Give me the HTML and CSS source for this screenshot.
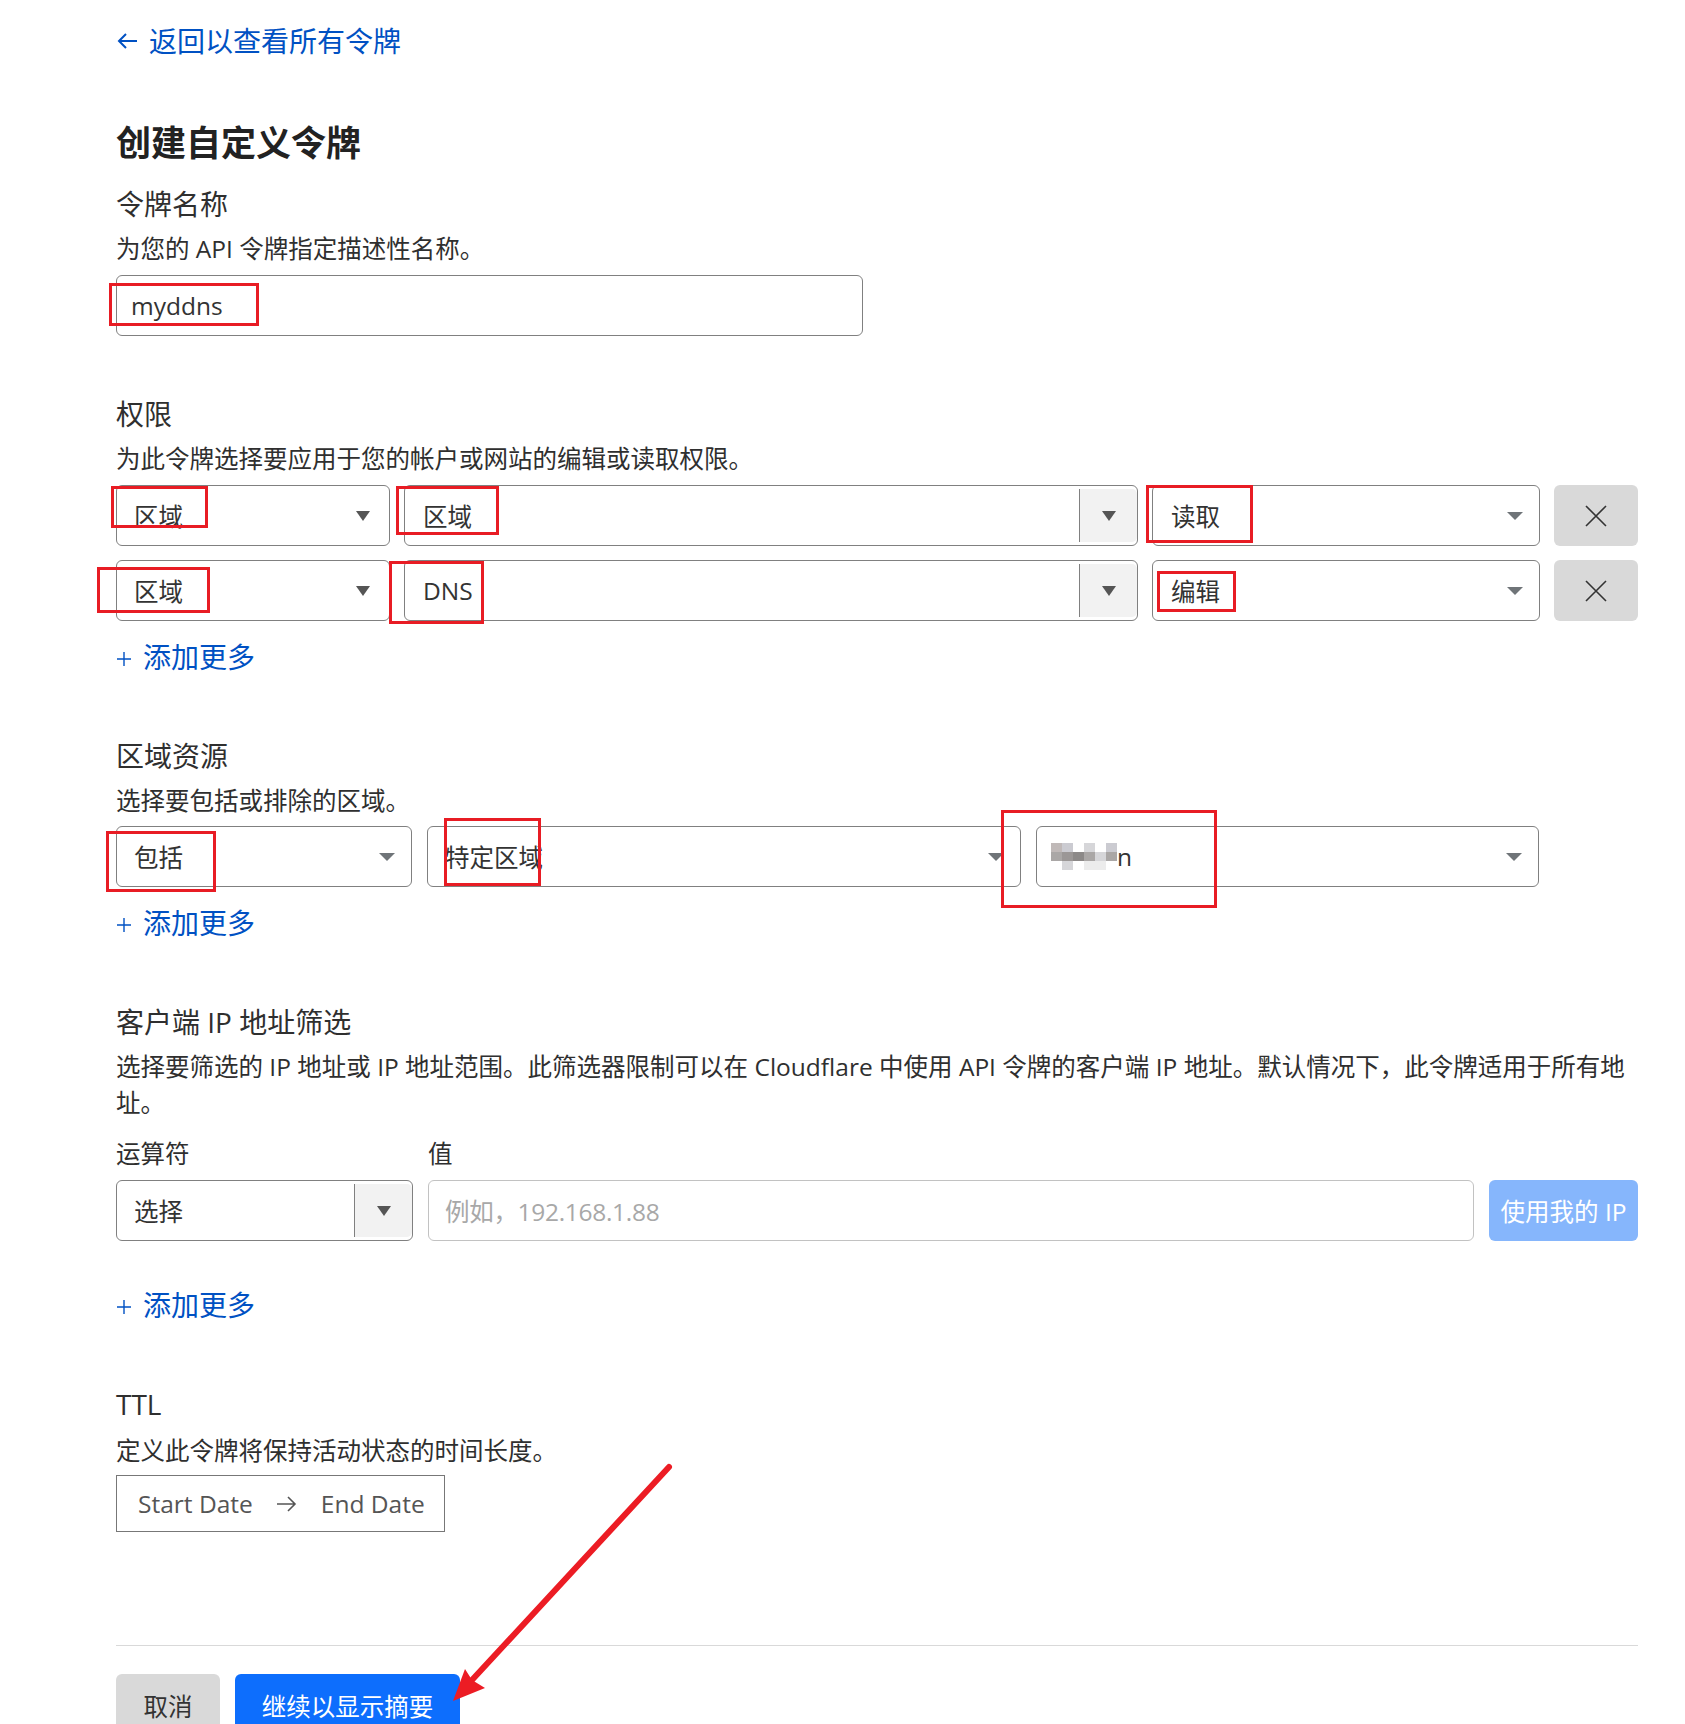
FILE: index.html
```html
<!DOCTYPE html>
<html lang="zh-CN">
<head>
<meta charset="utf-8">
<title>创建自定义令牌</title>
<link rel="stylesheet" href="styles.css">
</head>
<body>
<div class="page">
  <a class="back-link" href="#">
    <svg width="22" height="20" viewBox="0 0 22 20"><path d="M10 3 L3 10 L10 17 M3 10 H21" fill="none" stroke="currentColor" stroke-width="2"/></svg>
    返回以查看所有令牌
  </a>

  <h1 class="page-title">创建自定义令牌</h1>

  <section class="section">
    <h2 class="section-title">令牌名称</h2>
    <p class="section-desc">为您的 API 令牌指定描述性名称。</p>
    <div class="field field-name">myddns<span class="mark mark-name"></span></div>
  </section>

  <section class="section">
    <h2 class="section-title">权限</h2>
    <p class="section-desc">为此令牌选择要应用于您的帐户或网站的编辑或读取权限。</p>
    <div class="perm-rows">
      <div class="perm-row">
        <div class="field select">区域<span class="caret caret-dark"></span><span class="mark mark-p1"></span></div>
        <div class="field select combo wide-pad">区域<span class="combo-arrow"><span class="caret caret-dark"></span></span><span class="mark mark-p2"></span></div>
        <div class="field select wide-pad">读取<span class="caret"></span><span class="mark mark-p3"></span></div>
        <button class="remove-btn"><svg width="24" height="24" viewBox="0 0 24 24"><path d="M2 2 L22 22 M22 2 L2 22" stroke="#333" stroke-width="1.6"/></svg></button>
      </div>
      <div class="perm-row">
        <div class="field select">区域<span class="caret caret-dark"></span><span class="mark mark-p4"></span></div>
        <div class="field select combo wide-pad">DNS<span class="combo-arrow"><span class="caret caret-dark"></span></span><span class="mark mark-p5"></span></div>
        <div class="field select wide-pad">编辑<span class="caret"></span><span class="mark mark-p6"></span></div>
        <button class="remove-btn"><svg width="24" height="24" viewBox="0 0 24 24"><path d="M2 2 L22 22 M22 2 L2 22" stroke="#333" stroke-width="1.6"/></svg></button>
      </div>
    </div>
    <a class="add-more" href="#"><svg width="16" height="16" viewBox="0 0 16 16"><path d="M8 1 V15 M1 8 H15" stroke="currentColor" stroke-width="1.4"/></svg>添加更多</a>
  </section>

  <section class="section">
    <h2 class="section-title">区域资源</h2>
    <p class="section-desc">选择要包括或排除的区域。</p>
    <div class="zone-row">
      <div class="field select">包括<span class="caret"></span><span class="mark mark-z1"></span></div>
      <div class="field select">特定区域<span class="caret"></span><span class="mark mark-z2"></span></div>
      <div class="field select tight-pad">
        <span class="blurred">
          <i class="b1"></i><i class="b2"></i><i class="b0"></i><i class="b3"></i><i class="b0"></i><i class="b2"></i>
          <i class="b4"></i><i class="b5"></i><i class="b6"></i><i class="b4"></i><i class="b3"></i><i class="b4"></i>
          <i class="b0"></i><i class="b3"></i><i class="b0"></i><i class="b7"></i><i class="b7"></i><i class="b0"></i>
        </span>n<span class="caret"></span><span class="mark mark-z3"></span>
      </div>
    </div>
    <a class="add-more" href="#"><svg width="16" height="16" viewBox="0 0 16 16"><path d="M8 1 V15 M1 8 H15" stroke="currentColor" stroke-width="1.4"/></svg>添加更多</a>
  </section>

  <section class="section">
    <h2 class="section-title">客户端 IP 地址筛选</h2>
    <p class="section-desc">选择要筛选的 IP 地址或 IP 地址范围。此筛选器限制可以在 Cloudflare 中使用 API 令牌的客户端 IP 地址。默认情况下，此令牌适用于所有地址。</p>
    <div class="ip-grid">
      <label class="ip-label">运算符</label>
      <label class="ip-label">值</label>
      <span></span>
      <div class="field select combo">选择<span class="combo-arrow"><span class="caret caret-dark"></span></span></div>
      <div class="field field-value">例如，192.168.1.88</div>
      <button class="my-ip-btn">使用我的 IP</button>
    </div>
    <a class="add-more add-more-far" href="#"><svg width="16" height="16" viewBox="0 0 16 16"><path d="M8 1 V15 M1 8 H15" stroke="currentColor" stroke-width="1.4"/></svg>添加更多</a>
  </section>

  <section class="section section-ttl">
    <h2 class="section-title">TTL</h2>
    <p class="section-desc">定义此令牌将保持活动状态的时间长度。</p>
    <div class="date-range">
      <span>Start Date</span>
      <svg width="22" height="20" viewBox="0 0 22 20"><path d="M12 3 L19 10 L12 17 M19 10 H1" fill="none" stroke="#555" stroke-width="1.6"/></svg>
      <span>End Date</span>
    </div>
  </section>

  <div class="footer">
    <button class="btn btn-cancel">取消</button>
    <button class="btn btn-primary">继续以显示摘要</button>
  </div>

  <svg class="pointer" width="1685" height="1724" viewBox="0 0 1685 1724">
    <line x1="669" y1="1447" x2="472" y2="1660" stroke="#ec1c24" stroke-width="6" stroke-linecap="round"/>
    <polygon points="453,1681 465,1649 472,1660 485,1668" fill="#ec1c24"/>
  </svg>
</div>
</body>
</html>
```

FILE: styles.css
```css
html, body {
  margin: 0;
  background: #fff;
}

body {
  font-family: "Open Sans", "Noto Sans CJK SC", sans-serif;
  color: #2f2f2f;
  font-size: 24.5px;
}

.page {
  position: relative;
  width: 1522px;
  padding-left: 116px;
  padding-bottom: 40px;
}

.back-link {
  display: flex;
  align-items: center;
  gap: 11px;
  width: fit-content;
  margin-top: 20px;
  font-size: 28px;
  line-height: 42px;
  color: #0051c3;
  text-decoration: none;
}

.page-title {
  margin: 56px 0 0;
  font-size: 35px;
  line-height: 50px;
  font-weight: 700;
  color: #222;
}

.section {
  margin-top: 15px;
}

.section + .section {
  margin-top: 57px;
}

.section-title {
  margin: 0;
  font-size: 28px;
  line-height: 42px;
  font-weight: 400;
}

.section-desc {
  margin: 6px 0 0;
  font-size: 24.5px;
  line-height: 36px;
}

.section-ttl .section-desc {
  margin-top: 8px;
}

/* fields */
.field {
  position: relative;
  box-sizing: border-box;
  height: 61px;
  display: flex;
  align-items: center;
  border: 1px solid #808080;
  border-radius: 6px;
  padding: 0 16px 0 17px;
  font-size: 24.5px;
  color: #333;
  background: #fff;
}

.field-name {
  width: 747px;
  margin-top: 8px;
  padding-left: 14px;
}

.select.wide-pad {
  padding-left: 18px;
}

.select.tight-pad {
  padding-left: 14px;
}

.caret {
  margin-left: auto;
  width: 0;
  height: 0;
  border-left: 8px solid transparent;
  border-right: 8px solid transparent;
  border-top: 8px solid #6f7478;
}

.caret-dark {
  border-left-width: 7px;
  border-right-width: 7px;
  border-top: 10px solid #555;
}

.select > .caret-dark {
  margin-right: 3px;
}

.combo {
  padding-right: 0;
}

.combo-arrow {
  margin-left: auto;
  align-self: stretch;
  width: 57px;
  display: flex;
  align-items: center;
  justify-content: center;
  background: #f2f2f2;
  border-left: 1px solid #808080;
  border-radius: 0 5px 5px 0;
  margin-top: 3px;
  margin-bottom: 3px;
}

.combo-arrow .caret {
  margin-left: 0;
}

.perm-rows {
  margin-top: 8px;
  display: grid;
  row-gap: 14px;
}

.perm-row {
  display: grid;
  grid-template-columns: 274px 734px 388px 1fr;
  column-gap: 14px;
}

.remove-btn {
  height: 61px;
  border: none;
  border-radius: 6px;
  background: #d9d9d9;
  display: flex;
  align-items: center;
  justify-content: center;
  padding: 0;
}

.zone-row {
  margin-top: 7px;
  display: grid;
  grid-template-columns: 296px 594px 503px;
  column-gap: 15px;
}

.blurred {
  display: grid;
  grid-template-columns: repeat(6, 11px);
  grid-auto-rows: 9px;
}

.blurred i { display: block; }
.blurred .b0 { background: #fff; }
.blurred .b1 { background: #c0b9b8; }
.blurred .b2 { background: #cbcbd1; }
.blurred .b3 { background: #d6d6d9; }
.blurred .b4 { background: #aaa7a6; }
.blurred .b5 { background: #9b9796; }
.blurred .b6 { background: #8c8988; }
.blurred .b7 { background: #ececec; }

.add-more {
  display: flex;
  align-items: center;
  gap: 11px;
  width: fit-content;
  margin-top: 15px;
  font-size: 28px;
  line-height: 42px;
  color: #0051c3;
  text-decoration: none;
}

.add-more svg {
  margin-top: 3px;
}

.add-more-far {
  margin-top: 43px;
}

/* ip filter */
.ip-grid {
  margin-top: 15px;
  display: grid;
  grid-template-columns: 297px 1fr 149px;
  column-gap: 15px;
  row-gap: 8px;
}

.ip-label {
  line-height: 36px;
  font-size: 24.5px;
}

.field-value {
  border-color: #c2c2c2;
  color: #a8a8a8;
  padding-left: 16px;
  letter-spacing: -0.3px;
}

.my-ip-btn {
  height: 61px;
  border: none;
  border-radius: 6px;
  background: #86b6fc;
  color: #fff;
  font-family: inherit;
  font-size: 24.5px;
  padding: 0;
}

/* ttl */
.date-range {
  box-sizing: border-box;
  width: 329px;
  height: 57px;
  margin-top: 6px;
  border: 1px solid #777;
  display: flex;
  align-items: center;
  gap: 23px;
  padding-left: 21px;
  color: #555;
  font-size: 24.5px;
}

.footer {
  margin-top: 113px;
  border-top: 1px solid #d9d9d9;
  padding-top: 28px;
  display: flex;
  gap: 15px;
}

.btn {
  height: 63px;
  border: none;
  border-radius: 6px;
  font-family: inherit;
  font-size: 24.5px;
}

.btn-cancel {
  width: 104px;
  background: #d9d9d9;
  color: #333;
}

.btn-primary {
  width: 225px;
  background: #0d6efd;
  color: #fff;
}

/* red annotations */
.mark {
  position: absolute;
  box-sizing: border-box;
  border: 3px solid #e81c24;
  pointer-events: none;
}

.mark-name { left: -8px; top: 7px; width: 150px; height: 43px; }
.mark-p1 { left: -6px; top: 0; width: 97px; height: 42px; }
.mark-p2 { left: -9px; top: 0; width: 103px; height: 49px; }
.mark-p3 { left: -7px; top: -1px; width: 107px; height: 58px; }
.mark-p4 { left: -20px; top: 6px; width: 113px; height: 46px; }
.mark-p5 { left: -16px; top: 0; width: 95px; height: 63px; }
.mark-p6 { left: 4px; top: 10px; width: 79px; height: 41px; }
.mark-z1 { left: -11px; top: 4px; width: 110px; height: 61px; }
.mark-z2 { left: 16px; top: -9px; width: 97px; height: 68px; }
.mark-z3 { left: -36px; top: -17px; width: 216px; height: 98px; }

.pointer {
  position: absolute;
  left: 0;
  top: 0;
  pointer-events: none;
}
```
